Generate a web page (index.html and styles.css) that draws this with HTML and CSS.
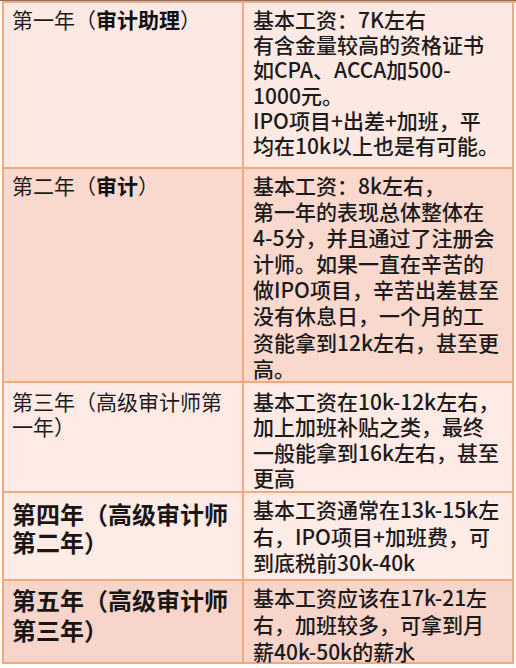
FILE: index.html
```html
<!DOCTYPE html>
<html lang="zh-CN">
<head>
<meta charset="utf-8">
<link rel="stylesheet" href="styles.css">
</head>
<body>
<div class="frame">
  <div class="sheet">
    <div class="cell r1 lc">第一年（<b>审计助理</b>）</div>
    <div class="cell r1 rc">基本工资：7K左右<br>有含金量较高的资格证书<br>如CPA、ACCA加500-<br>1000元。<br>IPO项目+出差+加班，平<br>均在10k以上也是有可能。</div>

    <div class="cell r2 lc">第二年（<b>审计</b>）</div>
    <div class="cell r2 rc">基本工资：8k左右，<br>第一年的表现总体整体在<br>4-5分，并且通过了注册会<br>计师。如果一直在辛苦的<br>做IPO项目，辛苦出差甚至<br>没有休息日，一个月的工<br>资能拿到12k左右，甚至更<br>高。</div>

    <div class="cell r3 lc">第三年（高级审计师第<br>一年）</div>
    <div class="cell r3 rc">基本工资在10k-12k左右，<br>加上加班补贴之类，最终<br>一般能拿到16k左右，甚至<br>更高</div>

    <div class="cell r4 lc big">第四年（高级审计师<br>第二年）</div>
    <div class="cell r4 rc">基本工资通常在13k-15k左<br>右，IPO项目+加班费，可<br>到底税前30k-40k</div>

    <div class="cell r5 lc big">第五年（高级审计师<br>第三年）</div>
    <div class="cell r5 rc">基本工资应该在17k-21左<br>右，加班较多，可拿到月<br>薪40k-50k的薪水</div>
  </div>
</div>
</body>
</html>
```

FILE: styles.css
```css
html, body {
  margin: 0;
  padding: 0;
  background: #ffffff;
}

.frame {
  width: 516px;
  height: 668px;
  border-top: 1px solid #8c6e64;
  box-sizing: border-box;
  padding-left: 2px;
}

.sheet {
  display: grid;
  width: 512px;
  grid-template-columns: 240px 270px;
  grid-template-rows: 166px 214px 110px 88px 83px;
  border-top: 2px solid #f2a97c;
  border-left: 2px solid #f2a97c;
  font-family: "Noto Sans CJK SC", "Microsoft YaHei", sans-serif;
  font-size: 21px;
  font-weight: 500;
  color: #1c1a1a;
}

.cell {
  border-right: 2px solid #f2a97c;
  border-bottom: 2px solid #f2a97c;
  white-space: nowrap;
}

.cell b {
  font-weight: 700;
  color: #111;
}

.lc {
  padding-left: 8px;
  font-weight: 400;
}

.rc {
  padding-left: 9px;
}

.r1 {
  background: #fce9e4;
  line-height: 25.2px;
  padding-top: 4px;
}

.r2 {
  background: #f9d8cd;
  line-height: 26.1px;
  padding-top: 3px;
}

.r3 {
  background: #fdeae5;
  line-height: 25.4px;
  padding-top: 6px;
}

.r4 {
  background: #fdebe6;
  line-height: 26.5px;
  padding-top: 3px;
}

.r5 {
  background: #f8d5ca;
  line-height: 27px;
  padding-top: 3px;
}

.lc.big {
  font-size: 24px;
  font-weight: 700;
  color: #1a1616;
}

.r4.lc.big {
  line-height: 28px;
  padding-top: 7px;
}

.r5.lc.big {
  line-height: 30px;
  padding-top: 4px;
}
```
